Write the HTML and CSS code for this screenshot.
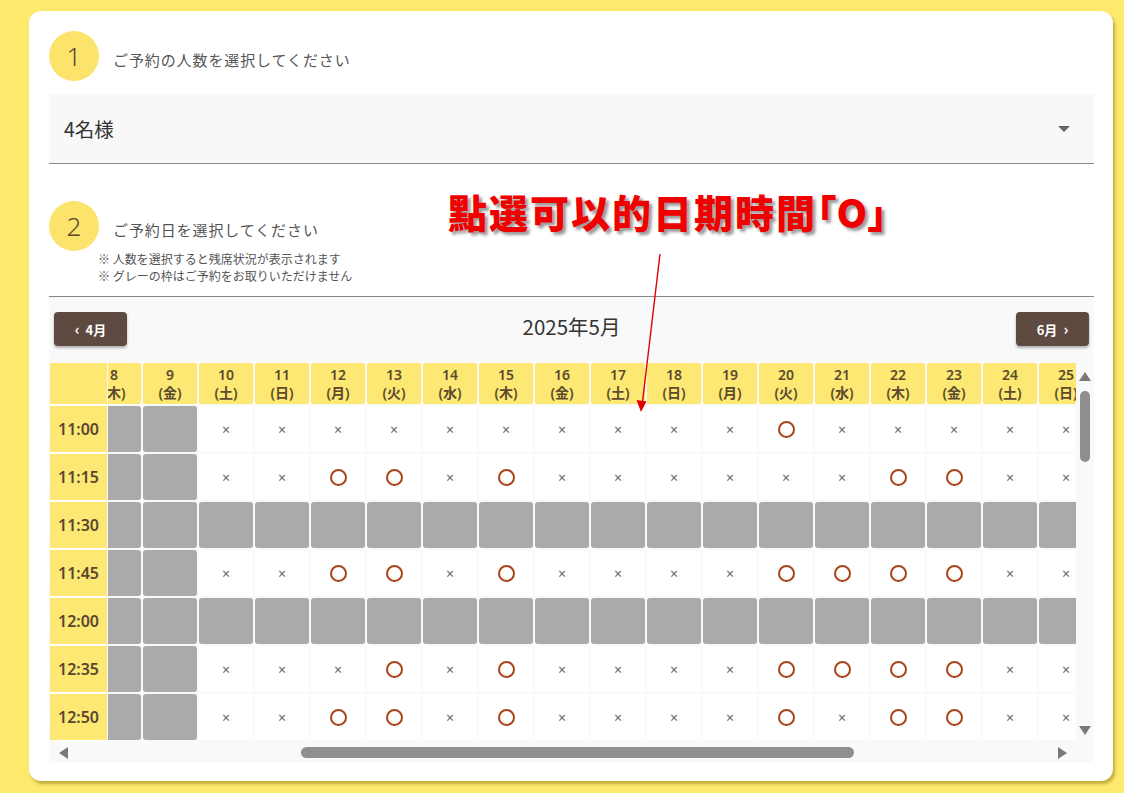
FILE: index.html
```html
<!DOCTYPE html>
<html lang="ja">
<head>
<meta charset="utf-8">
<title>ご予約</title>
<link rel="stylesheet" href="styles.css">
</head>
<body>
<div class="card">
  <div class="step">
    <div class="num">1</div>
    <div class="step-title">ご予約の人数を選択してください</div>
  </div>
  <div class="select"><span>4名様</span><span class="caret"></span></div>

  <div class="step step2">
    <div class="num">2</div>
    <div class="step-title">ご予約日を選択してください</div>
  </div>
  <div class="notes">
    <div>※ 人数を選択すると残席状況が表示されます</div>
    <div>※ グレーの枠はご予約をお取りいただけません</div>
  </div>

  <div class="cal">
    <div class="cal-head">
      <div class="mbtn"><span class="chev">‹</span>4月</div>
      <div class="month">2025年5月</div>
      <div class="mbtn">6月<span class="chev">›</span></div>
    </div>
    <div class="tt">
      <div class="tcol">
        <div class="corner"></div>
        <div class="time">11:00</div>
        <div class="time">11:15</div>
        <div class="time">11:30</div>
        <div class="time">11:45</div>
        <div class="time">12:00</div>
        <div class="time">12:35</div>
        <div class="time">12:50</div>
      </div>
      <div class="dates">
        <div class="grid">
          <span class="h">8<br>(木)</span><span class="h">9<br>(金)</span><span class="h">10<br>(土)</span><span class="h">11<br>(日)</span><span class="h">12<br>(月)</span><span class="h">13<br>(火)</span><span class="h">14<br>(水)</span><span class="h">15<br>(木)</span><span class="h">16<br>(金)</span><span class="h">17<br>(土)</span><span class="h">18<br>(日)</span><span class="h">19<br>(月)</span><span class="h">20<br>(火)</span><span class="h">21<br>(水)</span><span class="h">22<br>(木)</span><span class="h">23<br>(金)</span><span class="h">24<br>(土)</span><span class="h">25<br>(日)</span>

          <span class="g"></span><span class="g"></span><span class="x">×</span><span class="x">×</span><span class="x">×</span><span class="x">×</span><span class="x">×</span><span class="x">×</span><span class="x">×</span><span class="x">×</span><span class="x">×</span><span class="x">×</span><span class="o"><b></b></span><span class="x">×</span><span class="x">×</span><span class="x">×</span><span class="x">×</span><span class="x">×</span>

          <span class="g"></span><span class="g"></span><span class="x">×</span><span class="x">×</span><span class="o"><b></b></span><span class="o"><b></b></span><span class="x">×</span><span class="o"><b></b></span><span class="x">×</span><span class="x">×</span><span class="x">×</span><span class="x">×</span><span class="x">×</span><span class="x">×</span><span class="o"><b></b></span><span class="o"><b></b></span><span class="x">×</span><span class="x">×</span>

          <span class="g"></span><span class="g"></span><span class="g"></span><span class="g"></span><span class="g"></span><span class="g"></span><span class="g"></span><span class="g"></span><span class="g"></span><span class="g"></span><span class="g"></span><span class="g"></span><span class="g"></span><span class="g"></span><span class="g"></span><span class="g"></span><span class="g"></span><span class="g"></span>

          <span class="g"></span><span class="g"></span><span class="x">×</span><span class="x">×</span><span class="o"><b></b></span><span class="o"><b></b></span><span class="x">×</span><span class="o"><b></b></span><span class="x">×</span><span class="x">×</span><span class="x">×</span><span class="x">×</span><span class="o"><b></b></span><span class="o"><b></b></span><span class="o"><b></b></span><span class="o"><b></b></span><span class="x">×</span><span class="x">×</span>

          <span class="g"></span><span class="g"></span><span class="g"></span><span class="g"></span><span class="g"></span><span class="g"></span><span class="g"></span><span class="g"></span><span class="g"></span><span class="g"></span><span class="g"></span><span class="g"></span><span class="g"></span><span class="g"></span><span class="g"></span><span class="g"></span><span class="g"></span><span class="g"></span>

          <span class="g"></span><span class="g"></span><span class="x">×</span><span class="x">×</span><span class="x">×</span><span class="o"><b></b></span><span class="x">×</span><span class="o"><b></b></span><span class="x">×</span><span class="x">×</span><span class="x">×</span><span class="x">×</span><span class="o"><b></b></span><span class="o"><b></b></span><span class="o"><b></b></span><span class="o"><b></b></span><span class="x">×</span><span class="x">×</span>

          <span class="g"></span><span class="g"></span><span class="x">×</span><span class="x">×</span><span class="o"><b></b></span><span class="o"><b></b></span><span class="x">×</span><span class="o"><b></b></span><span class="x">×</span><span class="x">×</span><span class="x">×</span><span class="x">×</span><span class="o"><b></b></span><span class="x">×</span><span class="o"><b></b></span><span class="o"><b></b></span><span class="x">×</span><span class="x">×</span>
        </div>
      </div>
      <div class="vbar">
        <div class="vbtn up"><span class="tri-up"></span></div>
        <div class="vthumb"></div>
        <div class="vspace"></div>
        <div class="vbtn down"><span class="tri-down"></span></div>
      </div>
    </div>
    <div class="hbar">
      <div class="hbtn left"><span class="tri-left"></span></div>
      <div class="htrack"><div class="hthumb" style="margin-left:225px;width:553px"></div></div>
      <div class="hbtn right"><span class="tri-right"></span></div>
    </div>
  </div>
</div>

<div class="annot">點選可以的日期時間<span class="br">「O」</span></div>
<svg class="arrow" width="40" height="170" viewBox="0 0 40 170" xmlns="http://www.w3.org/2000/svg">
  <line x1="30" y1="4" x2="12.5" y2="152" stroke="#e00000" stroke-width="1.4"/>
  <polygon points="11,162 6.5,150 16.5,151.5" fill="#e00000"/>
</svg>
<script src="script.js"></script>
</body>
</html>
```

FILE: styles.css
```css
* { box-sizing: border-box; }
html, body { margin: 0; padding: 0; }
body {
  background: #fde96c;
  font-family: "Noto Sans", "Noto Sans CJK JP", sans-serif;
  width: 1124px;
  height: 793px;
  overflow: hidden;
  position: relative;
}
.card {
  margin: 11px 11px 0 29px;
  height: 770px;
  background: #fff;
  border-radius: 12px;
  box-shadow: 2px 3px 3px rgba(120, 100, 0, 0.45);
  padding: 20px 19px 18px 20px;
}
.step { display: flex; align-items: center; gap: 14px; }
.num {
  width: 50px; height: 50px; border-radius: 50%;
  background: #fce36c;
  display: flex; align-items: center; justify-content: center;
  font-size: 26px; color: #5a4630; font-weight: 300;
  font-family: "Noto Sans", sans-serif;
}
.step-title {
  font-family: "Noto Sans CJK JP", sans-serif;
  font-size: 15px; letter-spacing: 0.9px; color: #555; padding-top: 6px;
}
.select {
  margin-top: 13px; height: 70px; background: #f8f8f8;
  border-bottom: 1px solid #8a8a8a;
  display: flex; align-items: center; justify-content: space-between;
  padding: 0 24px 0 15px;
  font-family: "Noto Sans CJK JP", sans-serif;
  font-size: 19.5px; color: #333;
}
.caret {
  width: 0; height: 0;
  border-left: 6px solid transparent; border-right: 6px solid transparent;
  border-top: 6px solid #666;
}
.step2 { margin-top: 37px; }
.notes {
  margin: -1px 0 0 49px;
  font-family: "Noto Sans CJK JP", sans-serif;
  font-size: 12px; line-height: 17px; color: #555;
}
.cal {
  margin-top: 12px; border-top: 1px solid #888;
  background: #f9f9f9; padding: 15px 0 1px;
}
.cal-head {
  display: flex; justify-content: space-between; align-items: center;
  padding: 0 5px;
}
.mbtn {
  width: 73px; height: 34px; background: #5e4a41; color: #fff;
  border-radius: 4px; font-size: 13px; font-weight: 700;
  font-family: "Noto Sans CJK JP", sans-serif;
  display: flex; align-items: center; justify-content: center; gap: 6px;
  box-shadow: 0 2px 3px rgba(0, 0, 0, 0.3);
}
.chev { font-size: 15px; line-height: 1; margin-top: -2px; }
.month {
  font-family: "Noto Sans CJK JP", sans-serif;
  font-size: 20.5px; line-height: 1; color: #333; margin-top: -6px;
}
.tt { margin: 17px 0 0 1px; display: flex; height: 378px; overflow: hidden; }
.tcol {
  width: 57px; flex: none; display: flex; flex-direction: column; gap: 2px;
  background: #fff;
}
.corner { height: 41px; flex: none; background: #fde874; }
.time {
  height: 46px; flex: none; background: #fde874;
  display: flex; align-items: center; justify-content: center;
  font-size: 16px; font-weight: 600; color: #5a4630;
}
.dates { width: 968px; flex: none; margin-left: 1px; overflow: hidden; }
.grid {
  display: grid; width: max-content;
  grid-template-columns: repeat(18, 54px);
  grid-template-rows: 41px repeat(7, 46px);
  gap: 2px;
}
.h {
  background: #fde874; border-radius: 2px;
  display: flex; align-items: center; justify-content: center; text-align: center;
  font-family: "Noto Sans", "Noto Sans CJK JP", sans-serif;
  font-size: 14px; font-weight: 600; line-height: 18px; color: #5b4a2e;
  padding-top: 1px;
}
.g { background: #aaaaaa; border-radius: 3px; }
.x {
  background: #fff; display: flex; align-items: center; justify-content: center;
  font-size: 14px; color: #666;
}
.o { background: #fff; display: flex; align-items: center; justify-content: center; }
.o b {
  width: 17px; height: 17px; border: 2px solid #a8431a; border-radius: 50%;
  display: block;
}
.vbar { width: 18px; flex: none; display: flex; flex-direction: column; align-items: center; }
.vbtn { flex: none; width: 18px; display: flex; align-items: center; justify-content: center; }
.vbtn.up { height: 26px; }
.vbtn.down { height: 22px; }
.tri-up {
  width: 0; height: 0; border-left: 6px solid transparent; border-right: 6px solid transparent;
  border-bottom: 9px solid #7a7a7a;
}
.tri-down {
  width: 0; height: 0; border-left: 6px solid transparent; border-right: 6px solid transparent;
  border-top: 9px solid #7a7a7a;
}
.vthumb { margin-top: 2px; width: 10px; height: 71px; border-radius: 5px; background: #8f8f8f; flex: none; }
.vspace { flex: 1; }
.hbar { margin: 2px 0 0 1px; width: 1026px; height: 19px; display: flex; align-items: center; }
.hbtn { flex: none; height: 19px; display: flex; align-items: center; justify-content: center; }
.hbtn.left { width: 26px; }
.hbtn.right { width: 28px; }
.tri-left {
  width: 0; height: 0; border-top: 6px solid transparent; border-bottom: 6px solid transparent;
  border-right: 9px solid #7a7a7a;
}
.tri-right {
  width: 0; height: 0; border-top: 6px solid transparent; border-bottom: 6px solid transparent;
  border-left: 9px solid #7a7a7a;
}
.htrack { flex: 1; height: 11px; }
.hthumb { height: 11px; border-radius: 6px; background: #8f8f8f; }
.annot {
  position: absolute; left: 448px; top: 192px;
  font-family: "Noto Sans CJK TC", sans-serif;
  font-size: 39px; line-height: 1; font-weight: 900; letter-spacing: 2px;
  color: #f00000; white-space: nowrap;
  text-shadow: 3px 3px 3px rgba(0, 0, 0, 0.4);
}
.annot .br { font-feature-settings: "halt"; letter-spacing: 0; }
.arrow { position: absolute; left: 630px; top: 250px; }
```

FILE: script.js
```js
document.querySelector('.dates').scrollLeft = 21;
```
